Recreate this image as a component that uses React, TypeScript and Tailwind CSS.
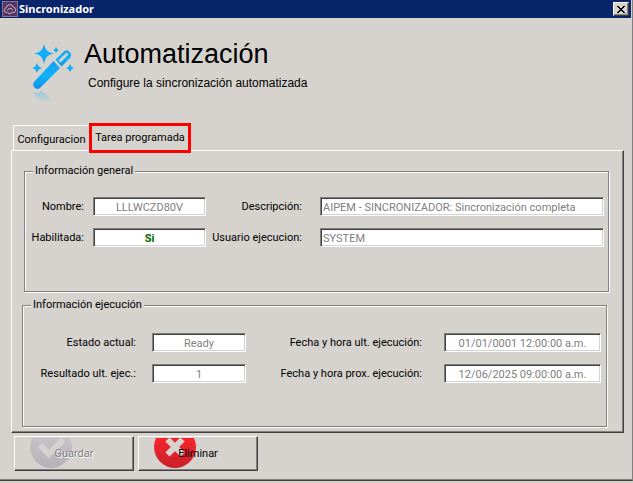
import type { ReactNode } from "react";

const raised =
  "border border-t-white border-l-white border-r-[#404040] border-b-[#404040] shadow-[inset_-1px_-1px_0_#808080]";

function CloudIcon() {
  return (
    <svg width="16" height="16" viewBox="0 0 16 16" aria-hidden="true">
      <rect x="0.5" y="0.5" width="15" height="15" fill="#573560" stroke="#8d7495" />
      <path
        d="M5 11.5H4.3A2.3 2.3 0 0 1 4 7a3.8 3.8 0 0 1 7.3-1A2.9 2.9 0 0 1 12 11.5H11M5.500 9.5a2.6 2.6 0 0 1 5-.5M10.5 10.5a2.6 2.6 0 0 1-5 .5"
        fill="none"
        stroke="#c9b9ce"
        strokeWidth="1"
      />
    </svg>
  );
}

function WandIcon() {
  return (
    <svg width="48" height="62" viewBox="0 0 48 62" aria-hidden="true">
      <defs>
        <linearGradient id="wand" x1="0" y1="0" x2="0" y2="1">
          <stop offset="0" stopColor="#1a9df0" />
          <stop offset="0.5" stopColor="#0db4fb" />
          <stop offset="1" stopColor="#1690e6" />
        </linearGradient>
        <linearGradient id="fade" x1="0" y1="0" x2="0" y2="1">
          <stop offset="0" stopColor="#7cc4e6" stopOpacity="0.7" />
          <stop offset="1" stopColor="#7cc4e6" stopOpacity="0.1" />
        </linearGradient>
      </defs>
      <g fill="url(#wand)">
        <path d="M14 2Q15.2 10.5 24 11.5Q15.2 12.500 14 22Q12.800 12.500 4 11.5Q12.800 10.500 14 2Z" />
        <path d="M26 5Q26.700 7.300 29 8Q26.700 8.700 26 11Q25.300 8.700 23 8Q25.300 7.300 26 5Z" />
        <path d="M7 21Q7.900 25.100 12 26Q7.900 26.900 7 31Q6.100 26.900 2 26Q6.100 25.100 7 21Z" />
        <path d="M40 22Q40.800 25.200 44 26Q40.800 26.800 40 30Q39.200 26.800 36 26Q39.200 25.200 40 22Z" />
        <path d="M23.500 19L30 26L10 46Q7 48 4.500 45.500Q2 43 4 40Z" />
        <path
          fillRule="evenodd"
          d="M25.500 17.500L34.500 9Q37 7.500 39 9.500L40.500 11Q42 13 40.500 15.500L31.500 24.500ZM28.500 18.500L30.500 20.500L38.500 12.500L36.500 10.500Z"
        />
      </g>
      <path d="M3 49Q7 53 11 48.500L20 56L21 60L14 60Q4 56 3 49Z" fill="url(#fade)" />
    </svg>
  );
}

function BadgeIcon({ kind }: { kind: "check" | "cross" }) {
  const check = kind === "check";
  return (
    <svg
      className="absolute left-[15px] top-px"
      width="42"
      height="30"
      viewBox="0 0 42 30"
      aria-hidden="true"
    >
      <defs>
        <linearGradient id={kind} x1="0" y1="0" x2="0" y2="1">
          <stop offset="0.3" stopColor={check ? "#c4c2c6" : "#f5252d"} />
          <stop offset="1" stopColor={check ? "#b4b2b8" : "#c9202a"} />
        </linearGradient>
      </defs>
      <circle cx="21" cy="9" r="21" fill={`url(#${kind})`} />
      {check ? (
        <path d="M10 7L19 16L33 2" fill="none" stroke="#d6d3ce" strokeWidth="6" />
      ) : (
        <path d="M13.500 1.500L28.500 16.500M28.500 1.500L13.500 16.500" fill="none" stroke="#d6d3ce" strokeWidth="6" />
      )}
    </svg>
  );
}

type FieldProps = {
  id: string;
  label: string;
  value: string;
  labelClass: string;
  inputClass?: string;
};

function Field({ id, label, value, labelClass, inputClass = "text-center text-[#808080]" }: FieldProps) {
  return (
    <>
      <label htmlFor={id} className={`text-right whitespace-nowrap ${labelClass}`}>
        {label}
      </label>
      <input
        id={id}
        readOnly
        defaultValue={value}
        className={`h-[19px] w-full min-w-0 border border-t-[#808080] border-l-[#808080] border-r-white border-b-white bg-white px-[2px] pt-[2px] outline-none shadow-[inset_1px_1px_0_#404040,inset_-1px_-1px_0_#d6d3ce] ${inputClass}`}
      />
    </>
  );
}

function Group({ title, className, children }: { title: string; className: string; children: ReactNode }) {
  return (
    <fieldset
      className={`border border-[#808080] shadow-[1px_1px_0_#fff,inset_1px_1px_0_#fff] ${className}`}
    >
      <legend className="ml-2 bg-[#d6d3ce] px-[2px] leading-4">{title}</legend>
      {children}
    </fieldset>
  );
}

export default function App() {
  return (
    <div className="min-h-screen bg-[#d6d3ce] font-[Roboto,'Liberation_Sans',sans-serif] text-[11px] leading-4 text-black">
      <main className="border-r border-b border-r-[#808080] border-b-[#404040] pb-[9px] shadow-[inset_0_-1px_0_#808080]">
        <header className="mr-px flex h-[18px] items-center bg-[#08246b] pr-[2px] pl-[2px]">
          <CloudIcon />
          <h1 className="ml-px flex-1 font-['Noto_Sans',sans-serif] text-[11px] font-bold text-white">
            Sincronizador
          </h1>
          <button
            type="button"
            aria-label="Cerrar"
            className={`flex h-[14px] w-4 items-center justify-center bg-[#d6d3ce] ${raised}`}
          >
            <svg width="8" height="7" viewBox="0 0 8 7" shapeRendering="crispEdges" aria-hidden="true">
              <path
                d="M0 0h2v1h1v1h2V1h1V0h2v1H7v1H6v1H5v1h1v1h1v1h1v1H6V6H5V5H3v1H2v1H0V6h1V5h1V4h1V3H2V2H1V1H0z"
                fill="#000"
              />
            </svg>
          </button>
        </header>

        <section className="flex h-[105px] gap-[6px] pt-6 pl-[30px] font-['Liberation_Sans',Arial,sans-serif]">
          <WandIcon />
          <div>
            <h2 className="text-[27px] leading-6">Automatización</h2>
            <p className="mt-[9px] pl-1 text-[12px]">Configure la sincronización automatizada</p>
          </div>
        </section>

        <div className="mr-2 ml-[11px]">
          <div role="tablist" className="flex items-end pl-[2px]">
            <button
              type="button"
              role="tab"
              aria-selected="false"
              className="h-[25px] w-[76px] rounded-t-[2px] border-t border-l border-white pt-1 whitespace-nowrap"
            >
              Configuracion
            </button>
            <button
              type="button"
              role="tab"
              aria-selected="true"
              className="z-10 -mb-[3px] h-[30px] w-[102px] border-3 border-[#ff0000] bg-[#d6d3ce] whitespace-nowrap"
            >
              Tarea programada
            </button>
          </div>
          <div className={`pt-3 pr-[14px] pb-[5px] pl-[10px] ${raised}`}>
            <Group title="Información general" className="ml-[2px] pb-[44px]">
              <div className="grid grid-cols-[68px_113px_114px_1fr] items-center gap-y-3 pt-[18px] pr-1">
                <Field id="nombre" label="Nombre:" value="LLLWCZD80V" labelClass="pr-[9px]" />
                <Field
                  id="descripcion"
                  label="Descripción:"
                  value="AIPEM - SINCRONIZADOR: Sincronización completa"
                  labelClass="pr-[18px]"
                  inputClass="text-[#808080]"
                />
                <Field
                  id="habilitada"
                  label="Habilitada:"
                  value="Si"
                  labelClass="pr-[9px]"
                  inputClass="text-center font-bold text-[#006400]"
                />
                <Field
                  id="usuario"
                  label="Usuario ejecucion:"
                  value="SYSTEM"
                  labelClass="pr-[18px]"
                  inputClass="text-[#808080]"
                />
              </div>
            </Group>
            <Group title="Información ejecución" className="mt-[5px] mr-[2px] pb-[43px]">
              <div className="grid grid-cols-[129px_94px_1fr_157px] items-center gap-y-3 pt-5 pr-[5px]">
                <Field id="estado" label="Estado actual:" value="Ready" labelClass="pr-4" />
                <Field id="ultima" label="Fecha y hora ult. ejecución:" value="01/01/0001 12:00:00 a.m." labelClass="pr-[22px]" />
                <Field id="resultado" label="Resultado ult. ejec.:" value="1" labelClass="pr-4" />
                <Field id="proxima" label="Fecha y hora prox. ejecución:" value="12/06/2025 09:00:00 a.m." labelClass="pr-[22px]" />
              </div>
            </Group>
          </div>
        </div>

        <footer className="flex gap-1 pt-[3px] pl-[14px]">
          <button
            type="button"
            disabled
            className={`relative h-[35px] w-[120px] text-[#808080] [text-shadow:1px_1px_0_#fff] ${raised}`}
          >
            <BadgeIcon kind="check" />
            <span className="relative">Guardar</span>
          </button>
          <button type="button" className={`relative h-[35px] w-[120px] ${raised}`}>
            <BadgeIcon kind="cross" />
            <span className="relative">Eliminar</span>
          </button>
        </footer>
      </main>
    </div>
  );
}
